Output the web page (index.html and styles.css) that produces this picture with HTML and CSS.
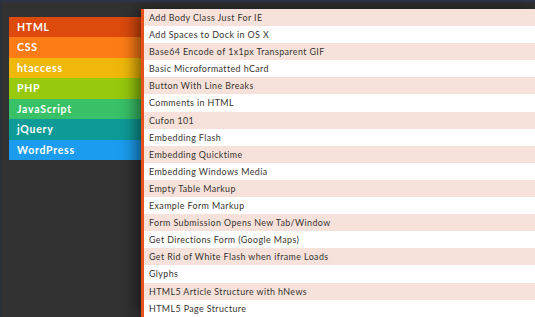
FILE: index.html
```html
<!DOCTYPE html>
<html lang="en">
<head>
  <meta charset="UTF-8" />
  <title>Snippets</title>
  <link rel="stylesheet" href="styles.css">
</head>
<body>

  <ul class="cats">
    <li class="cat cat-html">HTML</li>
    <li class="cat cat-css">CSS</li>
    <li class="cat cat-htaccess">htaccess</li>
    <li class="cat cat-php">PHP</li>
    <li class="cat cat-js">JavaScript</li>
    <li class="cat cat-jquery">jQuery</li>
    <li class="cat cat-wp">WordPress</li>
  </ul>

  <ul class="snippets">
    <li>Add Body Class Just For IE</li>
    <li>Add Spaces to Dock in OS X</li>
    <li>Base64 Encode of 1x1px Transparent GIF</li>
    <li>Basic Microformatted hCard</li>
    <li>Button With Line Breaks</li>
    <li>Comments in HTML</li>
    <li>Cufon 101</li>
    <li>Embedding Flash</li>
    <li>Embedding Quicktime</li>
    <li>Embedding Windows Media</li>
    <li>Empty Table Markup</li>
    <li>Example Form Markup</li>
    <li>Form Submission Opens New Tab/Window</li>
    <li>Get Directions Form (Google Maps)</li>
    <li>Get Rid of White Flash when iframe Loads</li>
    <li>Glyphs</li>
    <li>HTML5 Article Structure with hNews</li>
    <li>HTML5 Page Structure</li>
  </ul>

</body>
</html>
```

FILE: styles.css
```css
html, body {
  margin: 0;
  padding: 0;
  height: 100%;
  overflow: hidden;
}

body {
  font-family: Lato, "Open Sans", sans-serif;
  background-color: #323232;
  border-top: 2px solid #2b3447;
  border-left: 2px solid #2c303a;
  box-sizing: border-box;
  display: flex;
  align-items: flex-start;
  padding: 7px 0 0 7px;
}

ul {
  list-style: none;
  margin: 0;
  padding: 0;
}

/* Category menu */
.cats {
  width: 132px;
  margin-top: 8px;
  flex-shrink: 0;
}

.cat {
  height: 20.43px;
  line-height: 21px;
  padding-left: 8px;
  color: #fff;
  font-size: 10.5px;
  font-weight: bold;
  letter-spacing: 0.75px;
}

.cat-html { background-color: #dd4a0c; }
.cat-css { background-color: #fd7c16; }
.cat-htaccess { background-color: #f0b80a; }
.cat-php { background-color: #98c90d; }
.cat-js { background-color: #38c167; }
.cat-jquery { background-color: #0e9b98; }
.cat-wp { background-color: #1b9cee; }

/* Snippet list */
.snippets {
  flex: 1;
  position: relative;
  border-left: 3px solid #e5501b;
  box-shadow: -4px 0 16px rgba(0, 0, 0, 0.55);
}

.snippets li {
  height: 17.1px;
  line-height: 17.6px;
  padding-left: 5px;
  font-size: 8.9px;
  letter-spacing: 0.4px;
  color: #38332f;
  background-color: #fff;
}

.snippets li:nth-child(odd) {
  background-color: #f6e2da;
}
```
